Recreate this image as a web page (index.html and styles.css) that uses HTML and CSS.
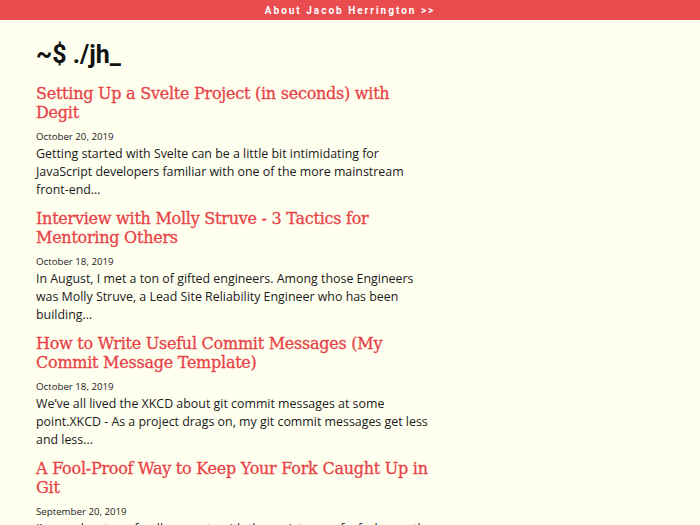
FILE: index.html
```html
<!DOCTYPE html>
<html lang="en">
<head>
<meta charset="utf-8">
<title>~$ ./jh_</title>
<link rel="stylesheet" href="styles.css">
</head>
<body>
<header class="topbar"><a class="topbar-link" href="#">About Jacob Herrington &gt;&gt;</a></header>
<main class="content">
  <h1 class="site-title">~$ ./jh_</h1>
  <article class="post">
    <h2 class="post-title"><a href="#">Setting Up a Svelte Project (in seconds) with Degit</a></h2>
    <p class="post-date">October 20, 2019</p>
    <p class="post-excerpt">Getting started with Svelte can be a little bit intimidating for JavaScript developers familiar with one of the more mainstream front-end…</p>
  </article>
  <article class="post">
    <h2 class="post-title"><a href="#">Interview with Molly Struve - 3 Tactics for Mentoring Others</a></h2>
    <p class="post-date">October 18, 2019</p>
    <p class="post-excerpt">In August, I met a ton of gifted engineers. Among those Engineers was Molly Struve, a Lead Site Reliability Engineer who has been building…</p>
  </article>
  <article class="post">
    <h2 class="post-title"><a href="#">How to Write Useful Commit Messages (My Commit Message Template)</a></h2>
    <p class="post-date">October 18, 2019</p>
    <p class="post-excerpt">We’ve all lived the XKCD about git commit messages at some point.XKCD - As a project drags on, my git commit messages get less and less…</p>
  </article>
  <article class="post">
    <h2 class="post-title"><a href="#">A Fool-Proof Way to Keep Your Fork Caught Up in Git</a></h2>
    <p class="post-date">September 20, 2019</p>
    <p class="post-excerpt">I’ve made a ton of pull requests with the assistance of a fork over the years, and I always find myself searching for the commands…</p>
  </article>
</main>
</body>
</html>
```
FILE: styles.css
```css
html, body {
  margin: 0;
  padding: 0;
}
body {
  background: #fffff0;
  color: #1a1a1a;
  font-family: "Open Sans", sans-serif;
}
.topbar {
  background: #e84c4f;
  height: 20px;
  display: flex;
  align-items: center;
  justify-content: center;
}
.topbar-link {
  color: #fff;
  text-decoration: none;
  font-family: Roboto, sans-serif;
  font-weight: 700;
  font-size: 10px;
  letter-spacing: 2px;
}
.content {
  padding: 20px 36px 0 36px;
  max-width: 400px;
}
.site-title {
  margin: 0 0 14px 0;
  font-family: Roboto, sans-serif;
  font-weight: 700;
  font-size: 25px;
  line-height: 30px;
  color: #111;
}
.post {
  margin-bottom: 10px;
}
.post-title {
  margin: 0;
  font-family: "DejaVu Serif", serif;
  font-weight: 400;
  font-size: 16px;
  letter-spacing: -0.25px;
  line-height: 19px;
}
.post-title a {
  color: #e84246;
  text-decoration: none;
  -webkit-text-stroke: 0.3px #e84246;
}
.post-date {
  margin: 7px 0 0 0;
  font-size: 9.7px;
  line-height: 16px;
}
.post-excerpt {
  margin: 0;
  font-size: 12.4px;
  line-height: 18px;
}
```
